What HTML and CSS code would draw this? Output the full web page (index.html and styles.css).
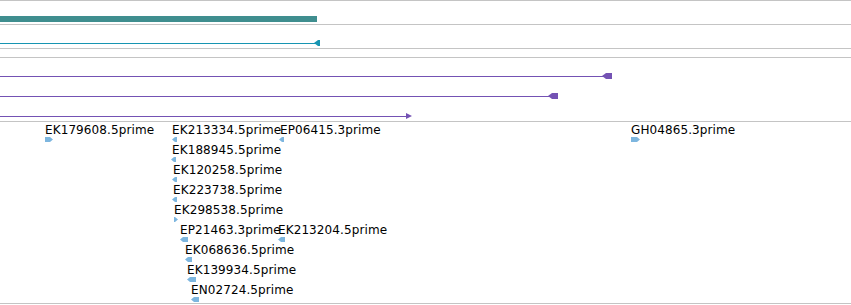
FILE: index.html
```html
<!DOCTYPE html>
<html lang="en">
<head>
  <meta charset="UTF-8" />
  <title>Tracks</title>
  <link rel="stylesheet" href="styles.css">
</head>
<body>

  <div class="track track-first track-bar">
    <div class="feature bar" style="left:0; width:317px;"></div>
  </div>

  <div class="track track-single">
    <div class="feature line teal" style="left:0; top:18px; width:316px;"></div>
    <div class="feature head teal head-left" style="left:314px; top:15px; width:6px;"></div>
  </div>

  <div class="track track-empty"></div>

  <div class="track track-genes">
    <div class="feature line purple" style="left:0; top:18px; width:604px;"></div>
    <div class="feature head purple head-left" style="left:602px; top:15px; width:10px;"></div>

    <div class="feature line purple" style="left:0; top:38px; width:550px;"></div>
    <div class="feature head purple head-left" style="left:548px; top:35px; width:10px;"></div>

    <div class="feature line purple" style="left:0; top:58px; width:408px;"></div>
    <div class="feature head purple head-right" style="left:406px; top:55px; width:6px;"></div>
  </div>

  <div class="track track-est">
    <div class="est" style="left:45px; top:0;"><span class="est-label">EK179608.5prime</span><i class="est-arrow right" style="width:8px;"></i></div>
    <div class="est" style="left:172px; top:0;"><span class="est-label">EK213334.5prime</span><i class="est-arrow left" style="width:5px;"></i></div>
    <div class="est" style="left:280px; top:0;"><span class="est-label">EP06415.3prime</span><i class="est-arrow left" style="width:5px; margin-left:-1px;"></i></div>
    <div class="est" style="left:631px; top:0;"><span class="est-label">GH04865.3prime</span><i class="est-arrow right" style="width:9px;"></i></div>

    <div class="est" style="left:172px; top:20px;"><span class="est-label">EK188945.5prime</span><i class="est-arrow left" style="width:5px; margin-left:-1px;"></i></div>
    <div class="est" style="left:173px; top:40px;"><span class="est-label">EK120258.5prime</span><i class="est-arrow left" style="width:5px; margin-left:-1px;"></i></div>
    <div class="est" style="left:173px; top:60px;"><span class="est-label">EK223738.5prime</span><i class="est-arrow left" style="width:5px; margin-left:-1px;"></i></div>
    <div class="est" style="left:174px; top:80px;"><span class="est-label">EK298538.5prime</span><i class="est-arrow right" style="width:4px;"></i></div>

    <div class="est" style="left:180px; top:100px;"><span class="est-label">EP21463.3prime</span><i class="est-arrow left" style="width:8px;"></i></div>
    <div class="est" style="left:278px; top:100px;"><span class="est-label">EK213204.5prime</span><i class="est-arrow left" style="width:7px;"></i></div>
    <div class="est" style="left:185px; top:120px;"><span class="est-label">EK068636.5prime</span><i class="est-arrow left" style="width:7px;"></i></div>
    <div class="est" style="left:187px; top:140px;"><span class="est-label">EK139934.5prime</span><i class="est-arrow left" style="width:9px;"></i></div>
    <div class="est" style="left:191px; top:160px;"><span class="est-label">EN02724.5prime</span><i class="est-arrow left" style="width:8px;"></i></div>
  </div>

</body>
</html>
```

FILE: styles.css
```css
* {
  box-sizing: border-box;
  margin: 0;
  padding: 0;
}

body {
  font-family: 'DejaVu Sans', 'Liberation Sans', sans-serif;
  background-color: white;
  color: black;
  width: 851px;
  overflow: hidden;
}

/* TRACKS */
.track {
  position: relative;
  border-bottom: 1px solid #c4c4c4;
}

.track-first {
  border-top: 1px solid #c4c4c4;
}

.track-bar { height: 25px; }
.track-single { height: 24px; }
.track-empty { height: 9px; }
.track-genes { height: 64px; }
.track-est { height: 182px; }

/* FEATURES */
.feature {
  position: absolute;
}

.bar {
  top: 15px;
  height: 6px;
  background-color: #3f8e8f;
}

.line {
  height: 1px;
}

.head {
  height: 6px;
}

.teal {
  background-color: #1795b2;
}

.purple {
  background-color: #7452b4;
}

.head-left {
  clip-path: polygon(0 50%, 4px 0, 100% 0, 100% 100%, 4px 100%);
}

.head-right {
  clip-path: polygon(0 0, 100% 50%, 0 100%);
}

/* EST LABELS */
.est {
  position: absolute;
  display: flex;
  flex-direction: column;
  align-items: flex-start;
}

.est-label {
  font-size: 12px;
  line-height: 14px;
  margin-top: 1px;
  white-space: nowrap;
  letter-spacing: 0.1px;
}

.est-arrow {
  display: block;
  height: 5px;
  background-color: #7db6df;
}

.est-arrow.left {
  clip-path: polygon(0 50%, 3px 0, 100% 0, 100% 100%, 3px 100%);
}

.est-arrow.right {
  clip-path: polygon(0 0, calc(100% - 3px) 0, 100% 50%, calc(100% - 3px) 100%, 0 100%);
}
```
